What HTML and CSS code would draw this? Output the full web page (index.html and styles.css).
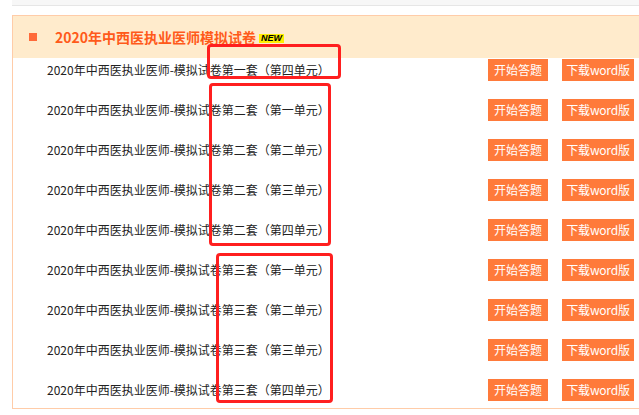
FILE: index.html
```html
<!DOCTYPE html>
<html lang="zh-CN">
<head>
    <meta charset="UTF-8">
    <meta name="viewport" content="width=device-width, initial-scale=1.0">
    <title>2020年中西医执业医师模拟试卷</title>
    <link rel="stylesheet" href="styles.css">
</head>
<body>
<div class="top-strip"></div>
<div class="panel">
    <div class="panel-head">
        <span class="bullet"></span>
        <h2 class="panel-title">2020年中西医执业医师模拟试卷</h2>
        <span class="badge-new">NEW</span>
    </div>
    <ul class="paper-list">
        <li class="paper-row">
            <span class="paper-name">2020年中西医执业医师-模拟试卷第一套（第四单元）</span>
            <a class="btn btn-start" href="#">开始答题</a>
            <a class="btn btn-word" href="#">下载word版</a>
        </li>
        <li class="paper-row">
            <span class="paper-name">2020年中西医执业医师-模拟试卷第二套（第一单元）</span>
            <a class="btn btn-start" href="#">开始答题</a>
            <a class="btn btn-word" href="#">下载word版</a>
        </li>
        <li class="paper-row">
            <span class="paper-name">2020年中西医执业医师-模拟试卷第二套（第二单元）</span>
            <a class="btn btn-start" href="#">开始答题</a>
            <a class="btn btn-word" href="#">下载word版</a>
        </li>
        <li class="paper-row">
            <span class="paper-name">2020年中西医执业医师-模拟试卷第二套（第三单元）</span>
            <a class="btn btn-start" href="#">开始答题</a>
            <a class="btn btn-word" href="#">下载word版</a>
        </li>
        <li class="paper-row">
            <span class="paper-name">2020年中西医执业医师-模拟试卷第二套（第四单元）</span>
            <a class="btn btn-start" href="#">开始答题</a>
            <a class="btn btn-word" href="#">下载word版</a>
        </li>
        <li class="paper-row">
            <span class="paper-name">2020年中西医执业医师-模拟试卷第三套（第一单元）</span>
            <a class="btn btn-start" href="#">开始答题</a>
            <a class="btn btn-word" href="#">下载word版</a>
        </li>
        <li class="paper-row">
            <span class="paper-name">2020年中西医执业医师-模拟试卷第三套（第二单元）</span>
            <a class="btn btn-start" href="#">开始答题</a>
            <a class="btn btn-word" href="#">下载word版</a>
        </li>
        <li class="paper-row">
            <span class="paper-name">2020年中西医执业医师-模拟试卷第三套（第三单元）</span>
            <a class="btn btn-start" href="#">开始答题</a>
            <a class="btn btn-word" href="#">下载word版</a>
        </li>
        <li class="paper-row">
            <span class="paper-name">2020年中西医执业医师-模拟试卷第三套（第四单元）</span>
            <a class="btn btn-start" href="#">开始答题</a>
            <a class="btn btn-word" href="#">下载word版</a>
        </li>
    </ul>
    <!-- red annotation marks drawn over the list -->
    <div class="mark mark-1"></div>
    <div class="mark mark-2"></div>
    <div class="mark mark-3"></div>
</div>
</body>
</html>
```

FILE: styles.css
```css
body {
    margin: 0;
    width: 639px;
    height: 415px;
    overflow: hidden;
    background-color: #ffffff;
    font-family: "Noto Sans CJK SC", "Liberation Sans", sans-serif;
    color: #222;
}

.top-strip {
    margin-left: 12px;
    height: 5px;
    background-color: #f7f7f7;
    border-bottom: 1px solid #e6e6e6;
}

.panel {
    position: relative;
    box-sizing: border-box;
    width: 627px;
    margin: 9px 0 0 12px;
    border: 1px solid #ffcca8;
    border-right: 0;
}

.panel-head {
    display: flex;
    align-items: center;
    height: 42px;
    background-color: #ffebcc;
}

.bullet {
    width: 8px;
    height: 8px;
    margin: 0 18px 0 16px;
    background-color: #ff6a3a;
}

.panel-title {
    margin: 0;
    font-size: 14px;
    font-weight: bold;
    color: #ff5a1a;
}

.badge-new {
    margin: 2px 0 0 3px;
    padding: 0 2px;
    height: 9px;
    line-height: 9px;
    font-family: "Liberation Sans", sans-serif;
    font-size: 9px;
    font-weight: bold;
    font-style: italic;
    color: #000;
    background-color: #ffee00;
}

.paper-list {
    list-style: none;
    margin: 0;
    padding: 1px 5px 7px 34px;
    display: flex;
    flex-direction: column;
    gap: 18px;
}

.paper-row {
    display: flex;
    align-items: center;
    height: 22px;
}

.paper-name {
    flex: 1;
    font-size: 12px;
    line-height: 20px;
    color: #222;
}

.btn {
    display: block;
    height: 22px;
    line-height: 22px;
    margin-left: 14px;
    font-size: 12px;
    text-align: center;
    white-space: nowrap;
    color: #fff;
    text-decoration: none;
    background-color: #ff7a3a;
}

.btn-start {
    width: 60px;
}

.btn-word {
    width: 72px;
    letter-spacing: -0.2px;
}

.mark {
    position: absolute;
    border: 3px solid #ff1f1f;
    border-radius: 4px;
}

.mark-1 {
    left: 194px;
    top: 28px;
    width: 128px;
    height: 29px;
}

.mark-2 {
    left: 196px;
    top: 67px;
    width: 116px;
    height: 157px;
}

.mark-3 {
    left: 203px;
    top: 237px;
    width: 111px;
    height: 144px;
}
```
